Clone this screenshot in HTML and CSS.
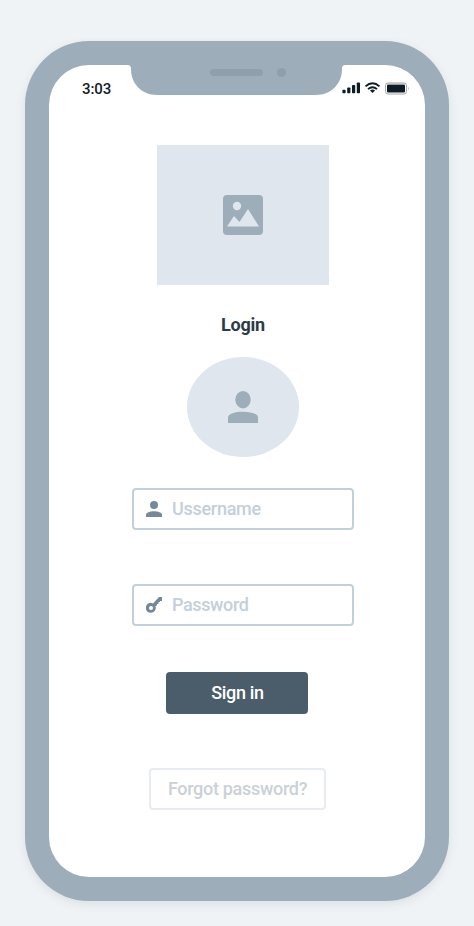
FILE: index.html
```html
<!DOCTYPE html>
<html lang="en">
<head>
<meta charset="utf-8">
<title>Login</title>
<link rel="stylesheet" href="styles.css">
</head>
<body>
<div class="phone">
  <main class="screen">
    <header class="status">
      <span class="time">3:03</span>
      <svg class="notch" width="219" height="30" viewBox="0 0 219 30" aria-hidden="true">
        <path fill="#9eadba" d="M0 0C3 0 4 1 4 4C4 19 15 30 30 30H189C204 30 215 19 215 4C215 1 216 0 219 0Z"/>
        <rect x="83" y="4" width="53" height="7" rx="3.5" fill="#8f9fae"/>
        <circle cx="154.500" cy="7.500" r="4.500" fill="#8f9fae"/>
      </svg>
      <svg class="indicators" width="68" height="14" viewBox="0 0 68 14" aria-hidden="true">
        <g fill="#101c25">
          <rect x=".4" y="7.700" width="3.200" height="3.600" rx=".8"/>
          <rect x="5.200" y="5.500" width="3.200" height="5.800" rx=".8"/>
          <rect x="10" y="3" width="3.200" height="8.300" rx=".8"/>
          <rect x="14.800" y=".5" width="3.200" height="10.800" rx=".8"/>
          <path d="M28 8.400Q30.500 6.600 33 8.400L30.500 11Z"/>
          <rect x="45" y="2.500" width="18" height="8" rx="1"/>
        </g>
        <g fill="none" stroke="#101c25" stroke-width="1.900">
          <path d="M23.500 4.400Q30.500-1.700 37.500 4.400"/>
          <path d="M26 7.100Q30.500 3.200 35 7.100"/>
        </g>
        <rect x="43.500" y="1" width="21" height="11" rx="2.500" fill="none" stroke="#8e9094" stroke-width=".8"/>
        <path d="M45 1.500H63" stroke="#c4c4c4" stroke-width="1.500"/>
        <path d="M66.300 4.800Q67.600 6.500 66.300 8.200Z" fill="#92949a"/>
      </svg>
    </header>

    <div class="picture">
      <svg width="40" height="40" viewBox="0 0 40 40" aria-hidden="true">
        <rect width="40" height="40" rx="4" fill="#9eadba"/>
        <circle cx="14" cy="11" r="4.200" fill="#dfe6ee"/>
        <path d="M4 31.500L11 21L16.500 27L25 14L36 31.500Z" fill="#dfe6ee"/>
      </svg>
    </div>

    <h1 class="title">Login</h1>

    <div class="avatar">
      <svg width="30" height="32" viewBox="0 0 30 32" aria-hidden="true">
        <ellipse cx="15" cy="8.700" rx="7.700" ry="8.700" fill="#9eadba"/>
        <path d="M0 32V26.500C0 18.700 30 18.700 30 26.500V32Z" fill="#9eadba"/>
      </svg>
    </div>

    <label class="field username">
      <svg width="16" height="16" viewBox="0 0 16 16" aria-hidden="true">
        <circle cx="8" cy="4" r="4" fill="#778899"/>
        <path d="M0 16V14C0 9 16 9 16 14V16Z" fill="#778899"/>
      </svg>
      <span>Ussername</span>
    </label>

    <label class="field password">
      <svg width="16" height="16" viewBox="0 0 16 16" aria-hidden="true">
        <path fill="#778899" fill-rule="evenodd" d="M13 0H16V4H14V5H12.500V7H11V8.300L9.500 9.300A5 5 0 1 1 7 6.400ZM5 9A2 2 0 1 0 5 13A2 2 0 1 0 5 9Z"/>
      </svg>
      <span>Password</span>
    </label>

    <button class="signin" type="button">Sign in</button>
    <button class="forgot" type="button">Forgot password?</button>
  </main>
</div>
</body>
</html>
```
FILE: styles.css
```css
* {
  box-sizing: border-box;
}

body {
  margin: 0;
  height: 926px;
  padding: 41px 25px 25px;
  background: #eff3f6;
  font-family: Roboto, "Liberation Sans", sans-serif;
  font-weight: 500;
  overflow: hidden;
}

svg {
  display: block;
  flex: none;
}

.phone {
  width: 424px;
  height: 860px;
  padding: 24px;
  border-radius: 64px;
  background: #9eadba;
  box-shadow: 0 3px 10px rgba(80, 95, 110, 0.12);
}

.screen {
  display: flex;
  flex-direction: column;
  align-items: flex-start;
  height: 812px;
  border-radius: 40px;
  background: #fff;
}

.status {
  display: flex;
  width: 376px;
  height: 80px;
}

.time {
  width: 45px;
  margin-left: 33px;
  padding-top: 15px;
  font-size: 15px;
  line-height: 18px;
  letter-spacing: -0.1px;
  color: #101c25;
}

.indicators {
  margin: 17px 0 0 -4px;
}

.picture {
  display: flex;
  align-items: center;
  justify-content: center;
  width: 172px;
  height: 140px;
  margin-left: 108px;
  background: #dfe6ee;
}

.title {
  width: 376px;
  margin: 28px 0 0;
  padding-left: 12px;
  font-size: 18px;
  font-weight: 700;
  line-height: 24px;
  letter-spacing: -0.2px;
  text-align: center;
  color: #2c3b47;
}

.avatar {
  display: flex;
  align-items: center;
  justify-content: center;
  width: 112px;
  height: 100px;
  margin: 20px 0 0 138px;
  padding: 0 1px 1px 0;
  border-radius: 50%;
  background: #dfe6ee;
}

.field {
  display: flex;
  align-items: center;
  gap: 10px;
  width: 222px;
  height: 42px;
  margin-left: 83px;
  padding: 0 12px;
  border: 2px solid #c3cfda;
  border-radius: 4px;
  font-size: 18px;
  letter-spacing: -0.28px;
  color: #c3cfda;
}

.field span {
  padding-bottom: 2px;
}

.username {
  margin-top: 31px;
}

.password {
  margin-top: 54px;
  letter-spacing: -0.38px;
}

.signin,
.forgot {
  height: 42px;
  padding: 0 0 2px;
  border-radius: 4px;
  font: inherit;
  font-size: 18px;
  letter-spacing: -0.3px;
}

.signin {
  width: 142px;
  margin: 46px 0 0 117px;
  padding-left: 1px;
  border: 0;
  background: #4b5c6a;
  color: #fff;
}

.forgot {
  width: 177px;
  margin: 54px 0 0 100px;
  border: 2px solid #e8ecf0;
  background: #fff;
  color: #cbd0d7;
}
```
